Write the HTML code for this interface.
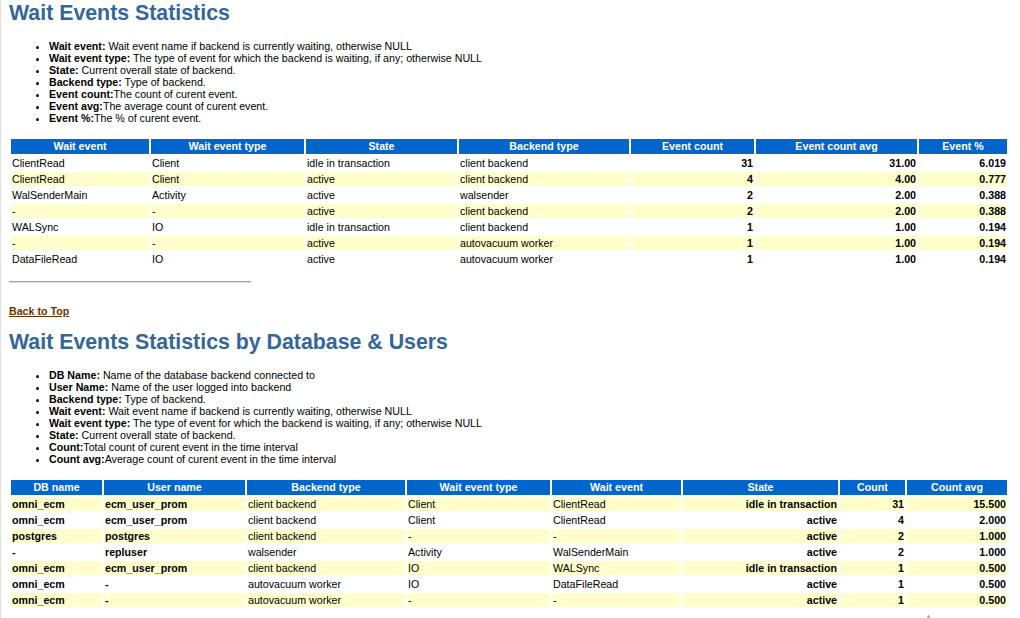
<!DOCTYPE html>
<html><head><meta charset="utf-8">
<style>
html,body{margin:0;padding:0;background:#fff;}
body{width:1020px;height:618px;overflow:hidden;position:relative;font-family:"Liberation Sans",sans-serif;color:#000;}
.edge{position:absolute;left:0;top:0;width:1px;height:618px;background:#e2e2e2;border-right:1px solid #f6f6f6;}
h3{position:absolute;left:9px;margin:0;padding:0;font:bold 16pt "Liberation Sans",sans-serif;color:#336699;white-space:nowrap;}
ul{position:absolute;left:9px;margin:0;padding:0 0 0 40px;}
li{font:8pt "Liberation Sans",sans-serif;color:#000;line-height:12px;white-space:nowrap;}
li b{font-weight:bold;}
table{position:absolute;left:9px;border-collapse:separate;border-spacing:2px;table-layout:fixed;}
th{font:bold 8pt "Liberation Sans",sans-serif;color:#fff;background:#0066CC;padding:1px 4px 2px 4px;height:12px;line-height:12px;white-space:nowrap;overflow:hidden;}
td{font:8pt "Liberation Sans",sans-serif;color:#000;background:#fff;vertical-align:top;padding:1px;height:12px;line-height:12px;white-space:nowrap;overflow:hidden;}
tr.c td{background:#FFFFCC;}
td.r{text-align:right;font-weight:bold;}
td.b{font-weight:bold;}
hr{position:absolute;left:9px;top:281px;width:242px;margin:0;border:0;border-top:1px solid #a0a0a0;border-bottom:1px solid #e0e0e0;height:0;}
a{position:absolute;left:9px;font:bold 8pt "Liberation Sans",sans-serif;color:#663300;text-decoration:underline;}
</style></head><body>
<div class="edge"></div>
<h3 style="top:1px">Wait Events Statistics</h3>
<ul style="top:40px">
<li><b>Wait event:</b> Wait event name if backend is currently waiting, otherwise NULL</li>
<li><b>Wait event type:</b> The type of event for which the backend is waiting, if any; otherwise NULL</li>
<li><b>State:</b> Current overall state of backend.</li>
<li><b>Backend type:</b> Type of backend.</li>
<li><b>Event count:</b>The count of curent event.</li>
<li><b>Event avg:</b>The average count of curent event.</li>
<li><b>Event %:</b>The % of curent event.</li>
</ul>
<table style="top:137px;width:1000px">
<colgroup><col style="width:138px"><col style="width:153px"><col style="width:151px"><col style="width:170px"><col style="width:123px"><col style="width:161px"><col style="width:88px"></colgroup>
<tr><th>Wait event</th><th>Wait event type</th><th>State</th><th>Backend type</th><th>Event count</th><th>Event count avg</th><th>Event %</th></tr>
<tr><td>ClientRead</td><td>Client</td><td>idle in transaction</td><td>client backend</td><td class="r">31</td><td class="r">31.00</td><td class="r">6.019</td></tr>
<tr class="c"><td>ClientRead</td><td>Client</td><td>active</td><td>client backend</td><td class="r">4</td><td class="r">4.00</td><td class="r">0.777</td></tr>
<tr><td>WalSenderMain</td><td>Activity</td><td>active</td><td>walsender</td><td class="r">2</td><td class="r">2.00</td><td class="r">0.388</td></tr>
<tr class="c"><td>-</td><td>-</td><td>active</td><td>client backend</td><td class="r">2</td><td class="r">2.00</td><td class="r">0.388</td></tr>
<tr><td>WALSync</td><td>IO</td><td>idle in transaction</td><td>client backend</td><td class="r">1</td><td class="r">1.00</td><td class="r">0.194</td></tr>
<tr class="c"><td>-</td><td>-</td><td>active</td><td>autovacuum worker</td><td class="r">1</td><td class="r">1.00</td><td class="r">0.194</td></tr>
<tr><td>DataFileRead</td><td>IO</td><td>active</td><td>autovacuum worker</td><td class="r">1</td><td class="r">1.00</td><td class="r">0.194</td></tr>
</table>
<hr>
<a style="top:305px">Back to Top</a>
<h3 style="top:330px">Wait Events Statistics by Database &amp; Users</h3>
<ul style="top:369px">
<li><b>DB Name:</b> Name of the database backend connected to</li>
<li><b>User Name:</b> Name of the user logged into backend</li>
<li><b>Backend type:</b> Type of backend.</li>
<li><b>Wait event:</b> Wait event name if backend is currently waiting, otherwise NULL</li>
<li><b>Wait event type:</b> The type of event for which the backend is waiting, if any; otherwise NULL</li>
<li><b>State:</b> Current overall state of backend.</li>
<li><b>Count:</b>Total count of curent event in the time interval</li>
<li><b>Count avg:</b>Average count of curent event in the time interval</li>
</ul>
<table style="top:478px;width:1000px">
<colgroup><col style="width:91px"><col style="width:141px"><col style="width:158px"><col style="width:143px"><col style="width:129px"><col style="width:155px"><col style="width:65px"><col style="width:100px"></colgroup>
<tr><th>DB name</th><th>User name</th><th>Backend type</th><th>Wait event type</th><th>Wait event</th><th>State</th><th>Count</th><th>Count avg</th></tr>
<tr class="c"><td class="b">omni_ecm</td><td class="b">ecm_user_prom</td><td>client backend</td><td>Client</td><td>ClientRead</td><td class="r">idle in transaction</td><td class="r">31</td><td class="r">15.500</td></tr>
<tr><td class="b">omni_ecm</td><td class="b">ecm_user_prom</td><td>client backend</td><td>Client</td><td>ClientRead</td><td class="r">active</td><td class="r">4</td><td class="r">2.000</td></tr>
<tr class="c"><td class="b">postgres</td><td class="b">postgres</td><td>client backend</td><td>-</td><td>-</td><td class="r">active</td><td class="r">2</td><td class="r">1.000</td></tr>
<tr><td class="b">-</td><td class="b">repluser</td><td>walsender</td><td>Activity</td><td>WalSenderMain</td><td class="r">active</td><td class="r">2</td><td class="r">1.000</td></tr>
<tr class="c"><td class="b">omni_ecm</td><td class="b">ecm_user_prom</td><td>client backend</td><td>IO</td><td>WALSync</td><td class="r">idle in transaction</td><td class="r">1</td><td class="r">0.500</td></tr>
<tr><td class="b">omni_ecm</td><td class="b">-</td><td>autovacuum worker</td><td>IO</td><td>DataFileRead</td><td class="r">active</td><td class="r">1</td><td class="r">0.500</td></tr>
<tr class="c"><td class="b">omni_ecm</td><td class="b">-</td><td>autovacuum worker</td><td>-</td><td>-</td><td class="r">active</td><td class="r">1</td><td class="r">0.500</td></tr>
</table>
<svg style="position:absolute;left:922px;top:613px" width="14" height="5" viewBox="0 0 14 5"><path d="M4.6 7 L6.6 3 L8.6 7" fill="none" stroke="#a8a8a8" stroke-width="1.3"/></svg>
</body></html>
